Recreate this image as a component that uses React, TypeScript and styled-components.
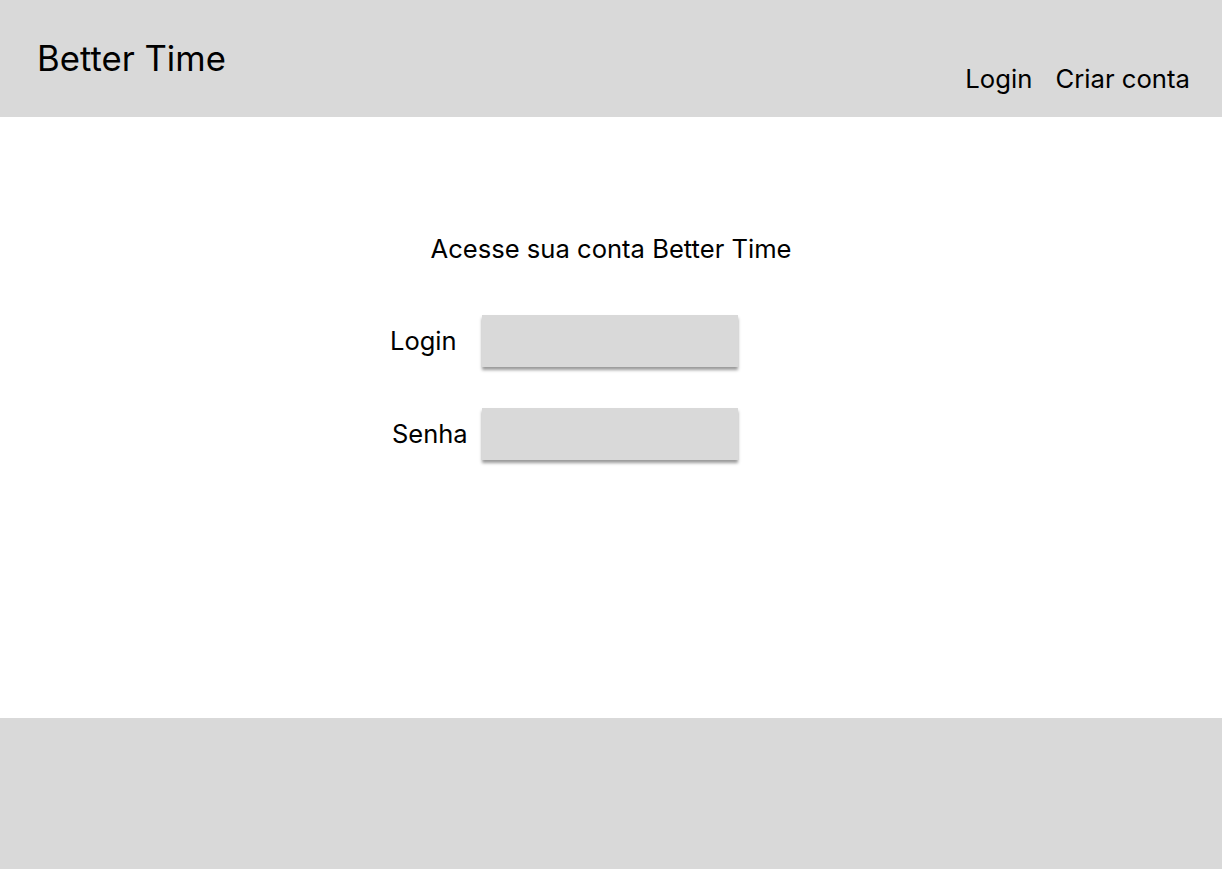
import * as React from 'react';
import styled, { createGlobalStyle } from 'styled-components';

const GlobalStyle = createGlobalStyle`
  html, body {
    margin: 0;
    padding: 0;
    background: #fff;
  }
  body {
    font-family: Inter, 'Noto Sans', sans-serif;
    color: #000;
  }
`;

const Page = styled.div`
  display: flex;
  flex-direction: column;
  min-height: 100vh;
`;

const Header = styled.header`
  height: 117px;
  background-color: #d9d9d9;
  display: flex;
  justify-content: space-between;
  align-items: flex-start;
  padding: 0 32px 0 37px;
  box-sizing: border-box;
`;

const Brand = styled.h1`
  margin: 37px 0 0 0;
  font-size: 34.7px;
  font-weight: 400;
  line-height: 1.21;
`;

const Nav = styled.nav`
  display: flex;
  gap: 23px;
  margin-top: 63px;
`;

const NavLink = styled.a`
  font-size: 25.7px;
  line-height: 1.21;
  color: #000;
  text-decoration: none;
  cursor: pointer;
`;

const Main = styled.main`
  flex: 1;
  display: flex;
  flex-direction: column;
  padding-top: 117px;
  min-height: 601px;
  box-sizing: border-box;
`;

const Title = styled.h2`
  margin: 0;
  align-self: center;
  font-size: 25.6px;
  font-weight: 400;
  line-height: 1.21;
`;

const Form = styled.form`
  display: grid;
  grid-template-columns: 92px 256px;
  row-gap: 41px;
  align-items: center;
  margin: 50px 0 0 calc(50% - 221px);
`;

const Label = styled.label<{ $indent?: number }>`
  font-size: 25.5px;
  line-height: 1.21;
  padding-left: ${p => p.$indent ?? 0}px;
`;

const Field = styled.input`
  width: 256px;
  height: 52px;
  box-sizing: border-box;
  border: none;
  outline: none;
  background-color: #d9d9d9;
  box-shadow: 0 3px 3px rgba(0, 0, 0, 0.4);
  font-family: inherit;
  font-size: 18px;
  padding: 0 12px;
`;

const Footer = styled.footer`
  height: 151px;
  background-color: #d9d9d9;
`;

export default function App() {
  return (
    <Page>
      <GlobalStyle />
      <Header>
        <Brand>Better Time</Brand>
        <Nav>
          <NavLink>Login</NavLink>
          <NavLink>Criar conta</NavLink>
        </Nav>
      </Header>
      <Main>
        <Title>Acesse sua conta Better Time</Title>
        <Form onSubmit={e => e.preventDefault()}>
          <Label htmlFor="login">Login</Label>
          <Field id="login" type="text" />
          <Label htmlFor="senha" $indent={2}>
            Senha
          </Label>
          <Field id="senha" type="password" />
        </Form>
      </Main>
      <Footer />
    </Page>
  );
}
